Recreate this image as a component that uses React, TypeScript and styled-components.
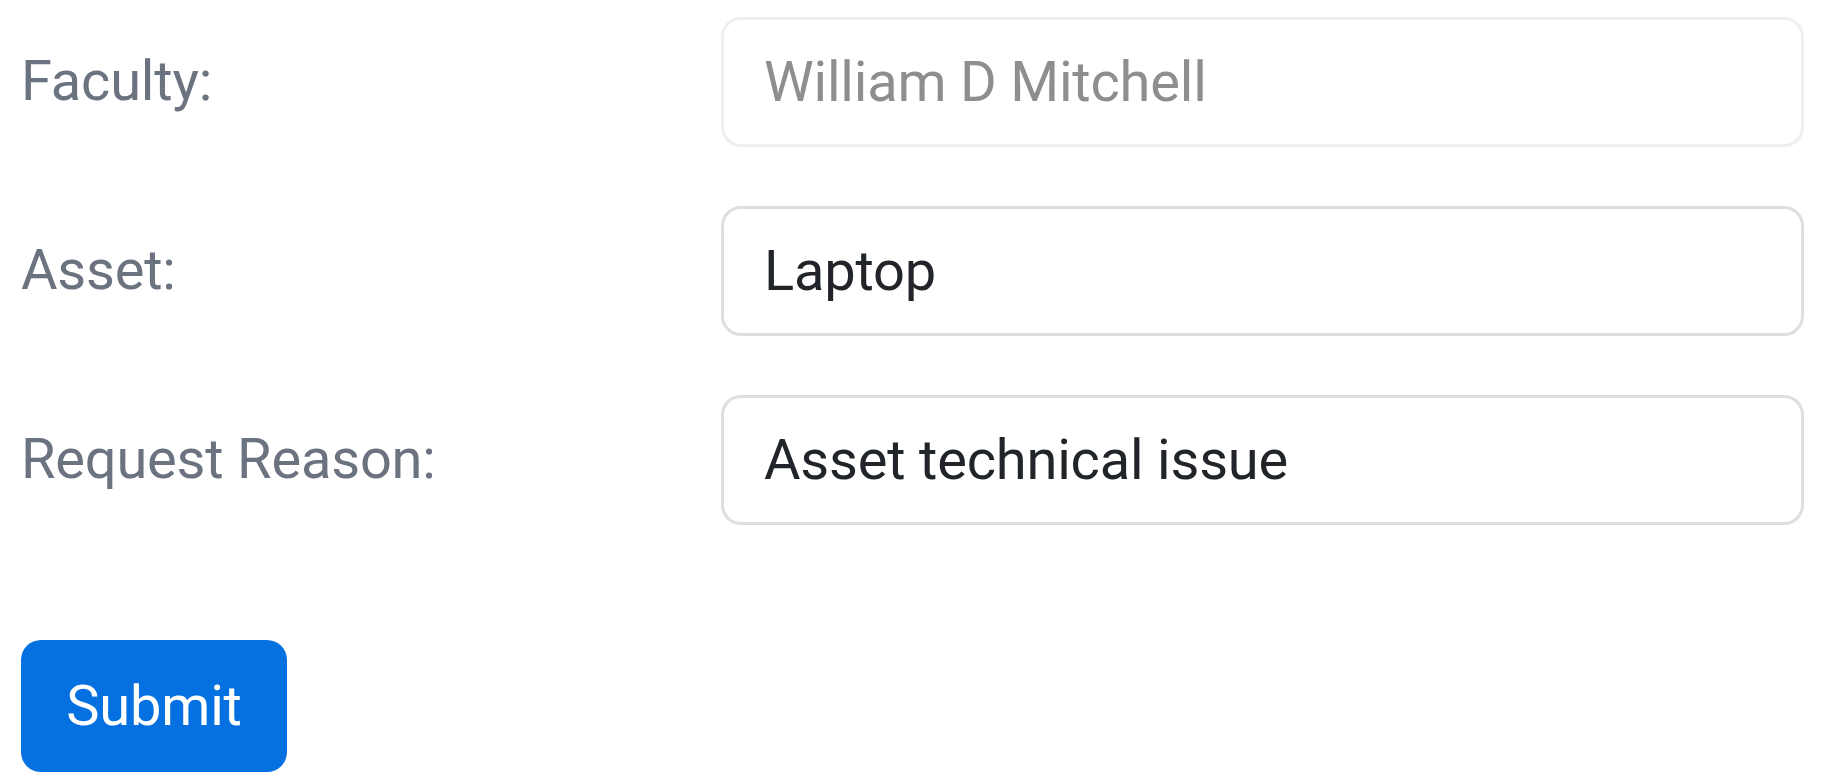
import React from "react";
import styled, { createGlobalStyle } from "styled-components";

const GlobalStyle = createGlobalStyle`
  html, body {
    margin: 0;
    padding: 0;
    background: #ffffff;
  }
  body {
    font-family: Roboto, "Noto Sans", "Liberation Sans", sans-serif;
  }
  * { box-sizing: border-box; }
`;

const Form = styled.form`
  display: flex;
  flex-direction: column;
  align-items: stretch;
  padding: 17px 22px 0 21px;
`;

const Row = styled.div`
  display: grid;
  grid-template-columns: 700px 1fr;
  align-items: center;
  margin-bottom: 59px;
`;

const Label = styled.label`
  font-size: 56px;
  letter-spacing: -0.2px;
  line-height: 1.2;
  color: #6b7280;
`;

const Field = styled.input<{ $muted?: boolean }>`
  height: 130px;
  width: 100%;
  padding: 0 40px;
  font-family: Roboto, "Noto Sans", "Liberation Sans", sans-serif;
  font-size: 56px;
  letter-spacing: -0.2px;
  color: ${(p) => (p.$muted ? "#8e8e8e" : "#212529")};
  background: #ffffff;
  border: 3px solid ${(p) => (p.$muted ? "#efefef" : "#dedede")};
  border-radius: 20px;
  outline: none;
`;

const Actions = styled.div`
  display: flex;
  margin-top: 56px;
`;

const Button = styled.button`
  height: 132px;
  width: 266px;
  padding: 0;
  font-family: Roboto, "Noto Sans", "Liberation Sans", sans-serif;
  font-size: 56px;
  letter-spacing: -0.2px;
  color: #ffffff;
  background: #0570e0;
  border: none;
  border-radius: 20px;
  cursor: pointer;
`;

const rows = [
  { label: "Faculty:", value: "William D Mitchell", muted: true },
  { label: "Asset:", value: "Laptop", muted: false },
  { label: "Request Reason:", value: "Asset technical issue", muted: false },
];

export default function App() {
  return (
    <>
      <GlobalStyle />
      <Form onSubmit={(e) => e.preventDefault()}>
        {rows.map((r) => (
          <Row key={r.label}>
            <Label>{r.label}</Label>
            <Field $muted={r.muted} value={r.value} readOnly />
          </Row>
        ))}
        <Actions>
          <Button type="submit">Submit</Button>
        </Actions>
      </Form>
    </>
  );
}
